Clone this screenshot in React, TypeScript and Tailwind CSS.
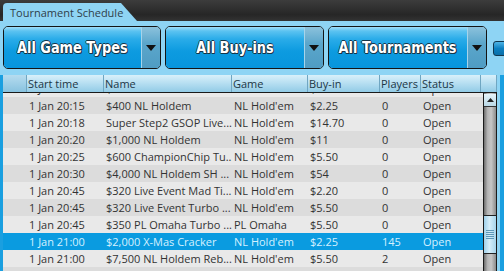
import React from 'react';

type Row = {
  time: string;
  name: string;
  game: string;
  buyIn: string;
  players: string;
  status: string;
  selected?: boolean;
};

const rows: Row[] = [
  { time: '1 Jan 20:10', name: '$200 NL Holdem', game: "NL Hold'em", buyIn: '$2.20', players: '0', status: 'Open' },
  { time: '1 Jan 20:15', name: '$400 NL Holdem', game: "NL Hold'em", buyIn: '$2.25', players: '0', status: 'Open' },
  { time: '1 Jan 20:18', name: 'Super Step2 GSOP Live...', game: "NL Hold'em", buyIn: '$14.70', players: '0', status: 'Open' },
  { time: '1 Jan 20:20', name: '$1,000 NL Holdem', game: "NL Hold'em", buyIn: '$11', players: '0', status: 'Open' },
  { time: '1 Jan 20:25', name: '$600 ChampionChip Tu...', game: "NL Hold'em", buyIn: '$5.50', players: '0', status: 'Open' },
  { time: '1 Jan 20:30', name: '$4,000 NL Holdem SH ...', game: "NL Hold'em", buyIn: '$54', players: '0', status: 'Open' },
  { time: '1 Jan 20:45', name: '$320 Live Event Mad Ti...', game: "NL Hold'em", buyIn: '$2.20', players: '0', status: 'Open' },
  { time: '1 Jan 20:45', name: '$320 Live Event Turbo ...', game: "NL Hold'em", buyIn: '$5.50', players: '0', status: 'Open' },
  { time: '1 Jan 20:45', name: '$350 PL Omaha Turbo ...', game: 'PL Omaha', buyIn: '$5.50', players: '0', status: 'Open' },
  { time: '1 Jan 21:00', name: '$2,000 X-Mas Cracker', game: "NL Hold'em", buyIn: '$2.25', players: '145', status: 'Open', selected: true },
  { time: '1 Jan 21:00', name: '$7,500 NL Holdem Reb...', game: "NL Hold'em", buyIn: '$5.50', players: '2', status: 'Open' },
  { time: '1 Jan 21:00', name: '$1,500 NL Holdem', game: "NL Hold'em", buyIn: '$5.50', players: '0', status: 'Open' },
];

const headers = ['', 'Start time', 'Name', 'Game', 'Buy-in', 'Players', 'Status', ''];

// Filter dropdown (blue glossy button with grey arrow part)
function FilterButton({ label, width }: { label: string; width: string }) {
  return (
    <div className={`${width} shrink-0 h-[43px] flex rounded-[5px] border-[1.5px] border-[#141414] overflow-hidden`}>
      <div className="flex-1 flex items-center justify-center bg-[linear-gradient(to_bottom,#9fdcf8_0px,#5cc3f1_4px,#2aace9_12px,#0d9be0_24px,#0795dc_100%)]">
        <span className="font-['DejaVu_Sans',sans-serif] text-[15px] font-bold text-white whitespace-nowrap scale-x-[0.86] mt-[1px] [text-shadow:-1px_0_#163548,1px_0_#163548,0_-1px_#163548,0_1px_#163548,1px_1px_#163548]">
          {label}
        </span>
      </div>
      <div className="w-[19px] flex items-center justify-center border-l border-[#a6d4ea] bg-[linear-gradient(to_bottom,#8cc2dc,#5ba6cb_40%,#4f9cc3)]">
        <svg width="10" height="6" viewBox="0 0 10 6">
          <path d="M0 0 L10 0 L5 6 Z" fill="#111" />
        </svg>
      </div>
    </div>
  );
}

export default function App() {
  return (
    <div className="w-[504px] h-[271px] overflow-hidden bg-[#8ed4f4] flex flex-col font-['Open_Sans',sans-serif]">
      {/* Top bar with tab */}
      <div className="h-[21px] flex items-end bg-[linear-gradient(to_bottom,#3c3c3c,#262626_70%,#333)]">
        <div className="ml-[3px] w-[134px] h-[18px] bg-[#8ed4f4] rounded-tl-[4px] [clip-path:polygon(0_0,118px_0,134px_100%,0_100%)] flex items-center pl-[7px]">
          <span className="text-[11px] text-[#2e3f4a] leading-none whitespace-nowrap">Tournament Schedule</span>
        </div>
      </div>

      {/* Filters */}
      <div className="flex items-start pl-[3px] pt-[5px]">
        <FilterButton label="All Game Types" width="w-[158px]" />
        <div className="w-[4px] shrink-0" />
        <FilterButton label="All Buy-ins" width="w-[159px]" />
        <div className="w-[4px] shrink-0" />
        <FilterButton label="All Tournaments" width="w-[159px]" />
        <div className="shrink-0 ml-[6px] mt-[15px] w-[20px] h-[15px] rounded-l-[3px] border border-[#10374f] bg-[linear-gradient(to_bottom,#4fb4e6,#0b7fc0_50%,#0a6fa8)]" />
      </div>

      {/* Table */}
      <div className="mt-[6px] flex-1 flex min-h-0">
        <div className="w-[3px] bg-[#1a9fe0]" />
        <div className="w-[494px] flex flex-col min-h-0">
          <div className="h-[17px] grid grid-cols-[24px_77px_128px_76px_72px_41px_60px_16px] bg-[linear-gradient(to_bottom,#d9f0fa,#b5def1_50%,#92cbe6)]">
            {headers.map((h, i) => (
              <div
                key={i}
                className={`border-r border-[#6fa6c2] pl-[1px] text-[11px] leading-[17px] text-[#1c3645] whitespace-nowrap overflow-hidden ${
                  i === 0 ? 'bg-[linear-gradient(to_bottom,#b6dcef,#88c2df)]' : ''
                }`}
              >
                {h}
              </div>
            ))}
          </div>
          <div className="h-[1px] bg-[#1a1a1a]" />
          <div className="flex-1 flex min-h-0">
            <div className="w-[480px] overflow-hidden">
              <div className="-mt-[13px]">
                {rows.map((r, i) => (
                  <div
                    key={i}
                    className={`h-[17px] grid grid-cols-[24px_77px_128px_76px_72px_41px_62px] text-[11px] leading-[17px] whitespace-nowrap ${
                      r.selected
                        ? 'bg-[#0a9be0] text-[#d5f1ff]'
                        : i % 2 === 0
                        ? 'bg-[#e9e9e9] text-[#333]'
                        : 'bg-[#dcdcdc] text-[#333]'
                    }`}
                  >
                    <div />
                    <div className="pl-[2px] overflow-hidden">{r.time}</div>
                    <div className="pl-[2px] overflow-hidden">{r.name}</div>
                    <div className="pl-[2px] overflow-hidden">{r.game}</div>
                    <div className="pl-[2px] overflow-hidden">{r.buyIn}</div>
                    <div className="pl-[2px] overflow-hidden">{r.players}</div>
                    <div className="pl-[2px] overflow-hidden">{r.status}</div>
                  </div>
                ))}
              </div>
            </div>
            {/* Scrollbar */}
            <div className="w-[14px] flex flex-col border-l border-r border-[#1a1a1a] bg-[linear-gradient(to_right,#6e6e6e,#b4b4b4_30%,#c6c6c6_60%,#8c8c8c)]">
              <div className="mt-[1px] h-[13px] flex items-center justify-center border-b border-[#333] bg-[linear-gradient(to_bottom,#e6f3f9,#b9d8e6)]">
                <svg width="7" height="4" viewBox="0 0 7 4">
                  <path d="M0 4 L7 4 L3.5 0 Z" fill="#222" />
                </svg>
              </div>
              <div className="h-[108px]" />
              <div className="h-[39px] flex flex-col items-center justify-center gap-[1px] border-t border-b border-[#222] bg-[linear-gradient(to_right,#9fd0ea,#d6eef9_45%,#a8d4ea)]">
                {[0, 1, 2, 3, 4].map((k) => (
                  <div key={k} className="w-[8px] h-[1px] bg-[#5e98b8]" />
                ))}
              </div>
            </div>
          </div>
        </div>
        <div className="w-[3px] bg-[#8ed4f4]" />
        <div className="w-[4px] bg-[#1a9fe0]" />
      </div>
    </div>
  );
}
